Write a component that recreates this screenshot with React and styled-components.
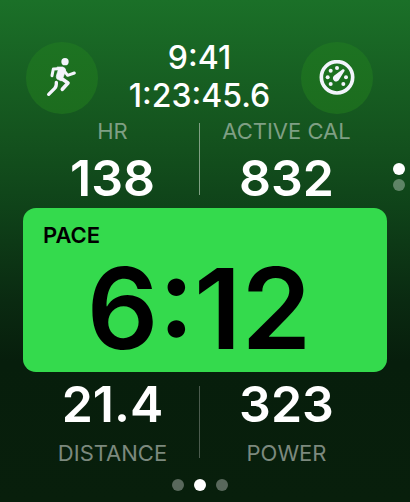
import React from "react";
import styled, { createGlobalStyle } from "styled-components";

const GlobalStyle = createGlobalStyle`
  *, *::before, *::after { box-sizing: border-box; }
  body {
    margin: 0;
    background: #081f0c;
    font-family: Inter, "Liberation Sans", sans-serif;
    color: #ffffff;
  }
`;

const Screen = styled.main`
  position: relative;
  min-height: 100vh;
  display: flex;
  flex-direction: column;
  padding-top: 42px;
  background: linear-gradient(
    #1b7028 0%,
    #14531e 27%,
    #0f4319 41%,
    #0a2a11 60%,
    #071e0c 72%,
    #081f0c 100%
  );
`;

const Header = styled.header`
  display: flex;
  justify-content: space-between;
  align-items: flex-start;
  padding: 0 37px 0 26px;
`;

const RoundButton = styled.button`
  display: grid;
  place-items: center;
  flex: none;
  width: 72px;
  height: 72px;
  padding: 0;
  border: 0;
  border-radius: 50%;
  background: linear-gradient(#1d7322, #1c6c1e);
  color: #f3f4fc;
`;

const Times = styled.div`
  text-align: center;
  font-size: 32px;
  line-height: 38px;
  font-weight: 500;
  margin-top: -4px;
  padding-top: 1px;
  margin-bottom: -1px;
`;

const MetricPair = styled.section`
  display: grid;
  grid-template-columns: 1fr 1px 1fr;
  padding: 0 37px 0 26px;
`;

const Divider = styled.span`
  height: 72px;
  margin-top: ${(p) => (p.$top ? 9 : 14)}px;
  background: ${(p) => (p.$top ? "#7fa083" : "#4b5b4e")};
`;

const Metric = styled.div`
  display: flex;
  flex-direction: ${(p) => (p.$labelLast ? "column-reverse" : "column")};
  align-items: center;
  justify-content: flex-end;
  gap: ${(p) => (p.$labelLast ? 2 : 0)}px;
  padding-top: ${(p) => (p.$labelLast ? 2 : 0)}px;
  white-space: nowrap;
`;

const MetricLabel = styled.span`
  font-size: 22px;
  line-height: 34px;
  color: ${(p) => (p.$dim ? "#7c897e" : "#7f9f84")};
`;

const MetricValue = styled.span`
  font-size: 50px;
  line-height: 60px;
  font-weight: 600;
`;

const PaceCard = styled.section`
  margin: 0 23px;
  padding: 14px 20px 4px;
  border-radius: 13px;
  background: #34da4d;
  color: #000000;
`;

const PaceLabel = styled.h2`
  margin: 0;
  font-size: 22px;
  line-height: 26px;
  font-weight: 600;
`;

const PaceValue = styled.p`
  margin: 0;
  padding-right: 12px;
  text-align: center;
  font-size: 112px;
  line-height: 120px;
  font-weight: 600;
`;

const Dot = styled.span`
  width: 12px;
  height: 12px;
  border-radius: 50%;
  background: ${(p) => (p.$active ? "#ffffff" : "rgba(255, 255, 255, 0.33)")};
`;

const PageDots = styled.nav`
  display: flex;
  justify-content: center;
  gap: 10px;
  padding: 9px 10px 0 0;
`;

const ScrollDots = styled.nav`
  position: absolute;
  top: 163px;
  right: 5px;
  display: flex;
  flex-direction: column;
  gap: 4px;
`;

function RunnerIcon() {
  return (
    <svg width="32" height="42" viewBox="76 66 96 126" fill="none" stroke="currentColor" strokeLinecap="round" strokeLinejoin="round" aria-hidden="true">
      <circle cx="133" cy="80" r="11" fill="currentColor" stroke="none" />
      <path d="M115 101 L98 102 L94 122" strokeWidth="9" />
      <path d="M128 104 L141 121 L161 114" strokeWidth="9" />
      <path d="M110 96 L126 96 Q134 98 135 105 L129 123 L122 138 L109 132 Q105 126 108 119 L112 107 Z" fill="currentColor" stroke="currentColor" strokeWidth="2" />
      <path d="M116 126 L142 144 L125 163" strokeWidth="11" />
      <path d="M107 142 Q108 154 102 160 L84 178" strokeWidth="10" />
    </svg>
  );
}

function GaugeIcon() {
  const marks = [[128, 98], [109, 106], [100, 126], [109, 146], [147, 146], [155, 126]];
  return (
    <svg width="36" height="36" viewBox="74 74 108 108" fill="currentColor" aria-hidden="true">
      <circle cx="128" cy="126" r="47" fill="none" stroke="currentColor" strokeWidth="11" />
      {marks.map(([x, y]) => (
        <circle key={`${x}-${y}`} cx={x} cy={y} r="6" />
      ))}
      <path d="M145 102 Q151 100 151 106 L135 132 A10 10 0 1 1 119 121 Z" />
    </svg>
  );
}

function MetricItem({ label, value, labelLast }) {
  return (
    <Metric $labelLast={labelLast}>
      <MetricLabel $dim={labelLast}>{label}</MetricLabel>
      <MetricValue>{value}</MetricValue>
    </Metric>
  );
}

export default function App() {
  return (
    <>
      <GlobalStyle />
      <Screen>
        <Header>
          <RoundButton type="button" aria-label="Workout"><RunnerIcon /></RoundButton>
          <Times>
            <div>9:41</div>
            <div>1:23:45.6</div>
          </Times>
          <RoundButton type="button" aria-label="Metrics"><GaugeIcon /></RoundButton>
        </Header>
        <MetricPair>
          <MetricItem label="HR" value="138" />
          <Divider $top />
          <MetricItem label="ACTIVE CAL" value="832" />
        </MetricPair>
        <PaceCard>
          <PaceLabel>PACE</PaceLabel>
          <PaceValue>6:12</PaceValue>
        </PaceCard>
        <MetricPair>
          <MetricItem label="DISTANCE" value="21.4" labelLast />
          <Divider />
          <MetricItem label="POWER" value="323" labelLast />
        </MetricPair>
        <PageDots aria-label="Pages">
          <Dot />
          <Dot $active />
          <Dot />
        </PageDots>
        <ScrollDots aria-label="Views">
          <Dot $active />
          <Dot />
        </ScrollDots>
      </Screen>
    </>
  );
}
